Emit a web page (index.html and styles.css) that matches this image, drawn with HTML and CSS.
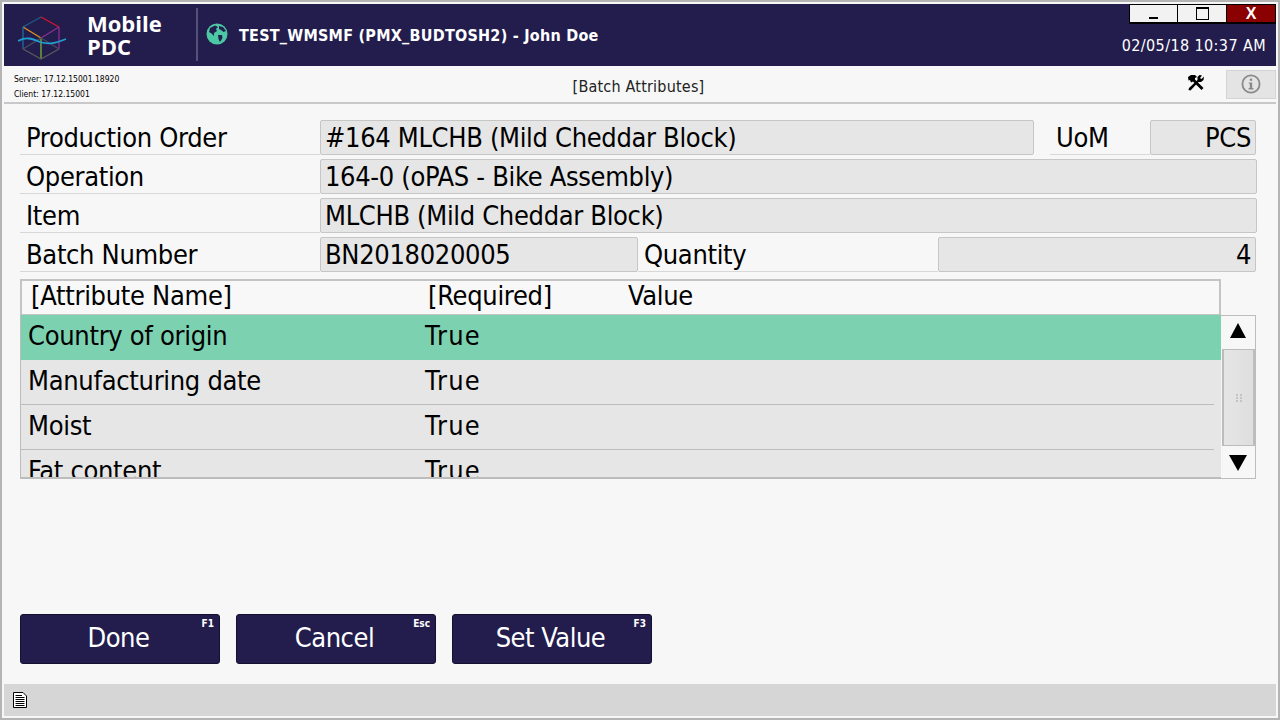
FILE: index.html
```html
<!DOCTYPE html>
<html lang="en">
<head>
<meta charset="utf-8">
<title>Batch Attributes</title>
<link rel="stylesheet" href="styles.css">
</head>
<body>
<div class="window">
  <header class="header">
    <div class="brand">
      <svg class="logo" viewBox="0 0 56 48" width="56" height="48">
        <g fill="none" stroke-width="1.3">
          <path d="M5 14 L23 4" stroke="#1c5f86"/>
          <path d="M23 4 L41 14" stroke="#d8152c"/>
          <path d="M5 14 L23 25" stroke="#e0931c"/>
          <path d="M23 25 L41 14" stroke="#8a2f8f"/>
          <path d="M5 14 V36" stroke="#1c6f9f"/>
          <path d="M41 14 V36" stroke="#8a2f8f"/>
          <path d="M23 25 V46" stroke="#7ab82e"/>
          <path d="M5 36 L23 46 L41 36" stroke="#5a5a5a"/>
          <path d="M5 36 L23 25 L41 36" stroke="#4a4a5a"/>
          <path d="M0 28 C8 24 13 25 22 29 C31 32 38 30 48 26" stroke="#1f9fd0" stroke-width="1.8"/>
        </g>
      </svg>
      <div class="brand-name">Mobile<br>PDC</div>
    </div>
    <div class="title">
      <svg class="globe" viewBox="0 0 22 22" width="22" height="22">
        <circle cx="11" cy="11" r="10.5" fill="#4dc8a4"/>
        <path d="M4 5 L9 2.5 L12 4 L10 6 L11 8 L8 10 L8 13 L5.5 10.5 L3 9 Z M12 12 L16 12 L16.5 15 L14 19 L12.5 16 Z M13 3 L17 4 L20 8 L17.5 9 L15 7 L13 6 Z" fill="#22204e"/>
      </svg>
      <span class="title-text">TEST_WMSMF (PMX_BUDTOSH2) - John Doe</span>
    </div>
    <div class="win-side">
      <div class="win-controls">
        <button class="win-btn" type="button"><span class="min-glyph"></span></button>
        <button class="win-btn" type="button"><span class="max-glyph"></span></button>
        <button class="win-btn win-close" type="button">X</button>
      </div>
      <div class="clock">02/05/18 10:37 AM</div>
    </div>
  </header>

  <div class="subbar">
    <div class="versions">
      <div>Server: 17.12.15001.18920</div>
      <div>Client: 17.12.15001</div>
    </div>
    <div class="screen-name">[Batch Attributes]</div>
    <div class="tools">
      <svg class="tool-icon" viewBox="0 0 18 18" width="18" height="18">
        <path d="M1 3 L4 1 L8 1 L10 3 L8 4 L8 5.5 L16.5 14 L14.5 16 L6 7.5 L4 8.5 L3 6 L1.5 6.5 Z" fill="#000"/>
        <path d="M17 2.5 L14.5 5 L13 4 L15 1.5 L12.5 1 L10.5 3 L10.5 6 L2 14 L1.5 16 L3.5 16.5 L11.5 8 L14 8 L16.5 6 Z" fill="#000"/>
      </svg>
      <div class="info-btn">
        <svg viewBox="0 0 20 20" width="20" height="20">
          <circle cx="10" cy="10" r="8.6" fill="none" stroke="#8a8a8a" stroke-width="1.8"/>
          <rect x="8.8" y="4.6" width="2.4" height="2.2" fill="#8a8a8a"/>
          <path d="M7.8 8.4 H11.2 V14 H12.4 V15.4 H7.6 V14 H8.8 V9.8 H7.8 Z" fill="#8a8a8a"/>
        </svg>
      </div>
    </div>
  </div>

  <main class="content">
    <div class="form">
      <div class="row row-1">
        <div class="label">Production Order</div>
        <div class="field">#164 MLCHB (Mild Cheddar Block)</div>
        <div class="label label-uom">UoM</div>
        <div class="field field-num">PCS</div>
      </div>
      <div class="row row-2">
        <div class="label">Operation</div>
        <div class="field">164-0 (oPAS - Bike Assembly)</div>
      </div>
      <div class="row row-2">
        <div class="label">Item</div>
        <div class="field">MLCHB (Mild Cheddar Block)</div>
      </div>
      <div class="row row-4">
        <div class="label">Batch Number</div>
        <div class="field">BN2018020005</div>
        <div class="label label-qty">Quantity</div>
        <div class="field field-num">4</div>
      </div>
    </div>

    <div class="grid">
      <div class="grid-head">
        <div class="col-name">[Attribute Name]</div>
        <div class="col-req">[Required]</div>
        <div class="col-val">Value</div>
      </div>
      <div class="grid-body">
        <div class="rows">
          <div class="grid-row selected"><div class="col-name">Country of origin</div><div class="col-req">True</div></div>
          <div class="grid-row"><div class="col-name">Manufacturing date</div><div class="col-req">True</div></div>
          <div class="grid-row"><div class="col-name">Moist</div><div class="col-req">True</div></div>
          <div class="grid-row"><div class="col-name">Fat content</div><div class="col-req">True</div></div>
        </div>
        <div class="scrollbar">
          <div class="arrow arrow-up"><svg viewBox="0 0 18 16" width="18" height="16"><path d="M9 0 L17 15 H1 Z" fill="#000"/></svg></div>
          <div class="thumb"><svg viewBox="0 0 6 8" width="6" height="8"><path d="M0 0h2v2H0zM4 0h2v2H4zM0 3h2v2H0zM4 3h2v2H4zM0 6h2v2H0zM4 6h2v2H4z" fill="#c4c4c4"/></svg></div>
          <div class="arrow arrow-down"><svg viewBox="0 0 18 16" width="18" height="16"><path d="M0 0 H18 L9 16 Z" fill="#000"/></svg></div>
        </div>
      </div>
    </div>

    <div class="actions">
      <button class="action" type="button">Done<span class="key">F1</span></button>
      <button class="action" type="button">Cancel<span class="key">Esc</span></button>
      <button class="action" type="button">Set Value<span class="key">F3</span></button>
    </div>
  </main>

  <footer class="status">
    <svg viewBox="0 0 14 16" width="14" height="16">
      <path d="M.5.5H10L13.5 4V15.5H.5Z" fill="#fff" stroke="#000"/>
      <path d="M2.5 3.5H9M2.5 5.5H11.5M2.5 7.5H11.5M2.5 9.5H11.5M2.5 11.5H11.5M2.5 13.5H11.5" stroke="#000"/>
    </svg>
  </footer>
</div>
</body>
</html>
```

FILE: styles.css
```css
* { box-sizing: border-box; }
html, body { margin: 0; height: 100%; }
body {
  width: 1280px;
  height: 720px;
  overflow: hidden;
  font-family: "DejaVu Sans Condensed", "DejaVu Sans", sans-serif;
  font-stretch: condensed;
  color: #000;
  background: #f7f7f7;
}
.window {
  width: 1280px;
  height: 720px;
  display: flex;
  flex-direction: column;
  border: 2px solid #b4b4b4;
  padding: 2px;
  background: #f7f7f7;
}
.header {
  height: 62px;
  flex: none;
  display: flex;
  background: #231d4e;
  color: #fff;
}
.brand {
  width: 192px;
  display: flex;
  align-items: center;
  padding-left: 14px;
  flex: none;
}
.logo { flex: none; margin-top: 4px; }
.brand-name {
  margin-left: 13px;
  font-family: "Open Sans", sans-serif;
  font-stretch: normal;
  font-weight: 700;
  font-size: 22px;
  line-height: 23px;
}
.title {
  margin-top: 4px;
  height: 53px;
  border-left: 2px solid #55527a;
  display: flex;
  align-items: center;
  padding: 0 0 0 8px;
  font-weight: 700;
  font-size: 16px;
  gap: 11px;
  flex: 1;
}
.title-text { letter-spacing: 0.25px; padding-top: 2px; }
.globe { flex: none; margin-top: -1px; }
.win-side {
  width: 150px;
  display: flex;
  flex-direction: column;
  align-items: flex-end;
  flex: none;
}
.win-controls { display: flex; background: #000; height: 20px; }
.win-btn {
  width: 49px;
  height: 19px;
  padding: 0;
  border: 1px solid #000;
  background: #f2f2f2;
  display: flex;
  align-items: center;
  justify-content: center;
  font-family: "Liberation Sans", sans-serif;
}
.win-btn + .win-btn { border-left: 0; }
.win-close { background: #8b0000; color: #fff; font-weight: 700; font-size: 16px; }
.min-glyph { width: 9px; height: 2px; background: #000; margin-top: 9px; }
.max-glyph { width: 13px; height: 13px; border: 1px solid #000; border-top-width: 2px; }
.clock { margin-top: 12px; margin-right: 10px; font-size: 16px; letter-spacing: 0.4px; white-space: nowrap; }
.subbar {
  height: 38px;
  flex: none;
  display: flex;
  align-items: center;
  border-bottom: 2px solid #c8c8c8;
  padding-left: 10px;
}
.versions { font-size: 8.5px; line-height: 15px; width: 170px; padding-top: 5px; flex: none; }
.screen-name { flex: 1; text-align: center; font-size: 16px; letter-spacing: 0.2px; padding: 4px 94px 0 0; color: #222; }
.tools { display: flex; align-items: center; gap: 21px; }
.tool-icon { flex: none; margin-bottom: 2px; }
.info-btn {
  width: 50px;
  height: 29px;
  background: #e4e4e4;
  border: 1px solid #d4d4d4;
  display: flex;
  align-items: center;
  justify-content: center;
}
.content {
  flex: 1;
  display: flex;
  flex-direction: column;
  padding: 16px 20px 20px 16px;
  min-height: 0;
}
.form { display: flex; flex-direction: column; gap: 4px; }
.row { display: grid; height: 35px; font-size: 27px; letter-spacing: -0.33px; }
.row-1 { grid-template-columns: 300px 714px 16px 100px 106px; }
.row-1 .label-uom { grid-column: 4; }
.row-2 { grid-template-columns: 300px 937px; }
.row-4 { grid-template-columns: 300px 318px 300px 318px; }
.label {
  height: 35px;
  border-bottom: 1px solid #d8d8d8;
  padding-left: 6px;
  line-height: 36px;
  white-space: nowrap;
}
.field {
  height: 35px;
  background: #e6e6e6;
  border: 1px solid #c6c6c6;
  border-radius: 2px;
  padding-left: 4px;
  line-height: 34px;
  white-space: nowrap;
  overflow: hidden;
}
.field-num { text-align: right; padding: 0 4px 0 0; }
.grid { margin-top: 7px; display: flex; flex-direction: column; font-size: 27px; letter-spacing: -0.3px; width: 1236px; }
.grid-head {
  width: 1201px;
  height: 36px;
  display: flex;
  border: 2px solid #c4c4c4;
  border-bottom-width: 1px;
  background: #f8f8f8;
  line-height: 30px;
}
.grid-head .col-name { width: 406px; padding-left: 9px; }
.grid-head .col-req { width: 200px; }
.grid-body { display: flex; height: 164px; }
.rows {
  width: 1201px;
  height: 164px;
  overflow: hidden;
  background: #e6e6e6;
  border-left: 1px solid #bcbcbc;
  border-bottom: 2px solid #bcbcbc;
}
.grid-row { height: 45px; display: flex; line-height: 41px; border-bottom: 1px solid #bcbcbc; margin-right: 7px; }
.grid-row .col-name { width: 404px; padding-left: 7px; }
.grid-row .col-req { letter-spacing: 1.2px; }
.grid-row.selected { background: #7bd1b0; margin-right: 0; border-bottom: 0; }
.scrollbar {
  width: 35px;
  height: 164px;
  flex: none;
  display: flex;
  flex-direction: column;
  border: 1px solid #bcbcbc;
  border-left: 0;
  background: #f7f7f7;
}
.arrow { flex: none; display: flex; justify-content: center; }
.arrow-up { height: 33px; padding-top: 7px; }
.arrow-down { height: 32px; padding-top: 9px; }
.thumb {
  flex: 1;
  margin: 0 0 0 1px;
  border: 2px solid #bcbcbc;
  border-top-width: 1px;
  border-bottom-width: 1px;
  background: linear-gradient(90deg, #e6e6e6, #dedede);
  display: flex;
  align-items: center;
  justify-content: center;
}
.actions { margin-top: auto; display: flex; gap: 16px; }
.action {
  position: relative;
  width: 200px;
  height: 50px;
  border: 1px solid #14112f;
  border-radius: 3px;
  background: #231d4e;
  color: #fff;
  font-family: inherit;
  font-stretch: inherit;
  font-size: 27px;
  letter-spacing: -0.5px;
  padding: 0 3px 3px 0;
}
.key { position: absolute; top: 3px; right: 5px; font-size: 10px; font-weight: 700; letter-spacing: 0; }
.status {
  height: 32px;
  flex: none;
  background: #d6d6d6;
  display: flex;
  align-items: center;
  padding-left: 9px;
}
```
